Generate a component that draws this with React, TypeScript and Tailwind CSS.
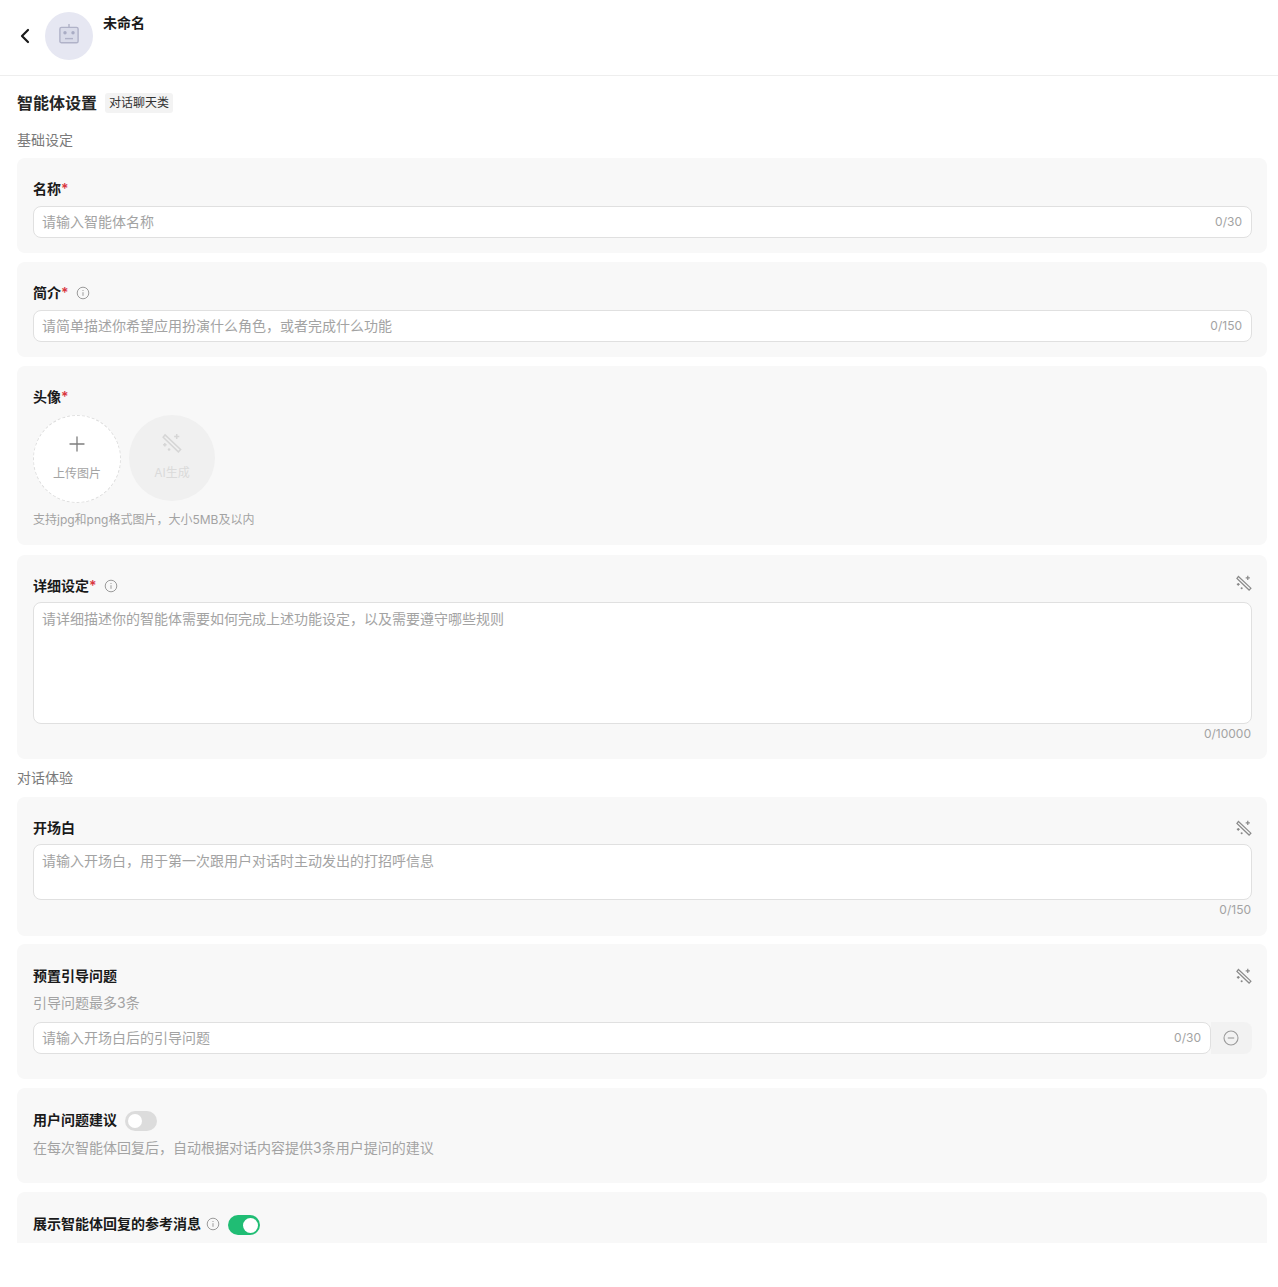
import type { ReactNode } from 'react';
import { ChevronLeft, Plus } from 'lucide-react';

const FONT = '"Inter", "Noto Sans CJK SC", sans-serif';

function InfoIcon() {
  return (
    <svg width="14" height="14" viewBox="0 0 14 14" fill="none" stroke="#9b9b9b" strokeWidth="1" aria-hidden="true">
      <circle cx="7" cy="7" r="5.8" />
      <path d="M7 6.2v3.6" />
      <path d="M7 4v1" />
    </svg>
  );
}

function WandIcon({ color = '#8a8a8a', size = 16 }: { color?: string; size?: number }) {
  return (
    <svg width={size} height={size} viewBox="0 0 17 17" fill="none" stroke={color} strokeWidth="1.3" aria-hidden="true">
      <path d="M2.6 1.6 15.8 14l-1.9 2L1 3.6z" />
      <path d="M12.5 0.8v4.4M10.3 3h4.4" />
      <path d="M2.4 8.4v3M0.9 9.9h3" />
      <circle cx="6" cy="14" r="1.1" fill={color} stroke="none" />
    </svg>
  );
}

function RobotIcon() {
  return (
    <svg width="20" height="20" viewBox="0 0 20 20" fill="none" stroke="#b0b2c8" strokeWidth="1.4" aria-hidden="true">
      <path d="M10 0v3.4" />
      <rect x="0.9" y="3.4" width="18.2" height="15.4" rx="1.6" fill="#d9dbe9" />
      <circle cx="6" cy="8.8" r="1.7" fill="#a9acc4" stroke="none" />
      <circle cx="14" cy="8.8" r="1.7" fill="#a9acc4" stroke="none" />
      <path d="M6 14.6h8" />
    </svg>
  );
}

function Label({ text, required, info, infoGap = 'ml-[7px]' }: { text: string; required?: boolean; info?: boolean; infoGap?: string }) {
  return (
    <div className="flex items-center h-6">
      <span className="pb-[1px] text-[14px] font-semibold text-[#1a1a1a]">{text}</span>
      {required && <span className="pb-[1px] text-[14px] font-semibold text-[#d9363e]">*</span>}
      {info && (
        <span className={`flex ${infoGap}`}>
          <InfoIcon />
        </span>
      )}
    </div>
  );
}

function Card({ children, className }: { children: ReactNode; className: string }) {
  return <section className={`rounded-lg bg-[#f8f8f8] pl-4 pr-[15px] ${className}`}>{children}</section>;
}

function TextInput({ placeholder, count }: { placeholder: string; count: string }) {
  return (
    <div className="flex h-8 items-center justify-between rounded-lg border border-[#e0e0e0] bg-white pl-2 pr-[9px]">
      <span className="pb-[2px] text-[14px] text-[#a3a3a3]">{placeholder}</span>
      <span className="text-[12px] text-[#a3a3a3]">{count}</span>
    </div>
  );
}

function TextArea({ placeholder, height }: { placeholder: string; height: string }) {
  return (
    <div className={`rounded-lg border border-[#e0e0e0] bg-white px-2 py-[5px] text-[14px] leading-[22px] text-[#a3a3a3] ${height}`}>
      {placeholder}
    </div>
  );
}

export default function App() {
  return (
    <div className="h-[1287px] bg-white" style={{ fontFamily: FONT }}>
      <header className="flex h-[76px] border-b border-[#eeeeee] pl-4 pt-3">
        <div className="flex h-12 w-[29px] items-center">
          <ChevronLeft size={24} strokeWidth={2.2} className="-ml-[3px] text-[#1a1a1a]" />
        </div>
        <div className="flex h-12 w-12 items-center justify-center rounded-full bg-[#e6e7f2] pb-[4px]">
          <RobotIcon />
        </div>
        <span className="-mt-[1px] ml-[10px] text-[14px] leading-[24px] font-semibold text-[#1a1a1a]">未命名</span>
      </header>

      <main className="h-[1167px] overflow-hidden pl-[17px] pr-[11px]">
        <div className="mt-[15px] flex h-6 items-center">
          <h1 className="text-[16px] font-semibold text-[#262626]">智能体设置</h1>
          <span className="ml-2 flex h-5 items-center rounded-[3px] bg-[#f3f3f3] px-1 text-[12px] text-[#333333]">对话聊天类</span>
        </div>
        <div className="mt-[13px] mb-[6px] h-6 text-[14px] leading-6 text-[#7a7a7a]">基础设定</div>

        <Card className="h-[95px] pt-[19px]">
          <Label text="名称" required />
          <div className="mt-[5px]">
            <TextInput placeholder="请输入智能体名称" count="0/30" />
          </div>
        </Card>

        <Card className="mt-[9px] h-[95px] pt-[19px]">
          <Label text="简介" required info />
          <div className="mt-[5px]">
            <TextInput placeholder="请简单描述你希望应用扮演什么角色，或者完成什么功能" count="0/150" />
          </div>
        </Card>

        <Card className="mt-[9px] h-[179px] pt-[19px]">
          <Label text="头像" required />
          <div className="mt-[6px] flex gap-2">
            <div className="flex h-[88px] w-[88px] flex-col items-center rounded-full border border-dashed border-[#dedede] bg-white pt-[16px]">
              <Plus size={24} strokeWidth={1.3} className="text-[#7d7d7d]" />
              <span className="mt-[8px] text-[12px] leading-5 text-[#a3a3a3]">上传图片</span>
            </div>
            <div className="flex h-[86px] w-[86px] flex-col items-center rounded-full bg-[#f0f0f0] pt-[18px]">
              <WandIcon color="#d6d6d6" size={20} />
              <span className="mt-[10px] text-[12px] leading-5 text-[#dadada]">AI生成</span>
            </div>
          </div>
          <div className="mt-[7px] text-[12px] leading-5 text-[#a3a3a3]">支持jpg和png格式图片，大小5MB及以内</div>
        </Card>

        <Card className="mt-[10px] h-[204px] pt-[19px]">
          <div className="flex items-start justify-between">
            <Label text="详细设定" required info />
            <span className="mt-[1px] flex">
              <WandIcon />
            </span>
          </div>
          <div className="mt-[4px]">
            <TextArea placeholder="请详细描述你的智能体需要如何完成上述功能设定，以及需要遵守哪些规则" height="h-[122px]" />
          </div>
          <div className="pr-[1px] text-right text-[12px] leading-5 text-[#a3a3a3]">0/10000</div>
        </Card>

        <div className="mt-[7px] mb-[7px] h-6 text-[14px] leading-6 text-[#7a7a7a]">对话体验</div>

        <Card className="h-[139px] pt-[19px]">
          <div className="flex items-center justify-between">
            <Label text="开场白" />
            <WandIcon />
          </div>
          <div className="mt-[4px]">
            <TextArea placeholder="请输入开场白，用于第一次跟用户对话时主动发出的打招呼信息" height="h-14" />
          </div>
          <div className="pr-[1px] text-right text-[12px] leading-5 text-[#a3a3a3]">0/150</div>
        </Card>

        <Card className="mt-2 h-[135px] pt-[20px]">
          <div className="flex items-center justify-between">
            <Label text="预置引导问题" />
            <WandIcon />
          </div>
          <div className="mt-[3px] text-[14px] leading-6 text-[#a3a3a3]">引导问题最多3条</div>
          <div className="mt-[7px] flex">
            <div className="flex-1">
              <TextInput placeholder="请输入开场白后的引导问题" count="0/30" />
            </div>
            <div className="flex h-8 w-[41px] items-center justify-center rounded-r-lg bg-[#f2f2f2] pr-[2px]">
              <svg width="16" height="16" viewBox="0 0 16 16" fill="none" stroke="#9b9b9b" strokeWidth="1.1" aria-hidden="true">
                <circle cx="8" cy="8" r="7" />
                <path d="M4.8 8h6.4" />
              </svg>
            </div>
          </div>
        </Card>

        <Card className="mt-[9px] h-[95px] pt-5">
          <div className="flex items-center gap-2">
            <Label text="用户问题建议" />
            <div className="mt-[2px] flex h-5 w-8 items-center rounded-full bg-[#dcdcdc] pl-[3px]">
              <div className="h-[14px] w-[14px] rounded-full bg-white" />
            </div>
          </div>
          <div className="mt-[4px] text-[14px] leading-6 text-[#a3a3a3]">在每次智能体回复后，自动根据对话内容提供3条用户提问的建议</div>
        </Card>

        <Card className="mt-[9px] h-[95px] pt-5">
          <div className="flex items-center">
            <Label text="展示智能体回复的参考消息" info infoGap="ml-[5px]" />
            <div className="ml-2 mt-[2px] flex h-5 w-8 items-center justify-end rounded-full bg-[#20bd74] pr-[2px]">
              <div className="h-[15px] w-[15px] rounded-full bg-white" />
            </div>
          </div>
        </Card>
      </main>
    </div>
  );
}
